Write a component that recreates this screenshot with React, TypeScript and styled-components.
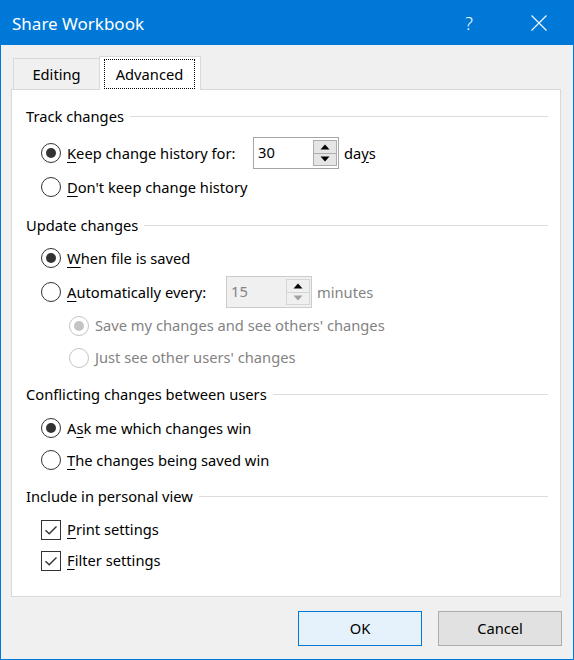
import React from "react";
import styled, { createGlobalStyle } from "styled-components";

const GlobalStyle = createGlobalStyle`
  html, body { margin: 0; padding: 0; background: #ffffff; }
  body { font-family: "Noto Sans", "Open Sans", Arial, sans-serif; }
  #root { width: 574px; height: 660px; }
`;

const FONT = `"Noto Sans", "Open Sans", Arial, sans-serif`;

const Window = styled.div`
  width: 574px;
  height: 660px;
  box-sizing: border-box;
  border: 1px solid #0078d7;
  border-top: none;
  display: flex;
  flex-direction: column;
  background: #f0f0f0;
  font-family: ${FONT};
  font-size: 14.7px;
  color: #000;
`;

const TitleBar = styled.div`
  height: 45px;
  flex-shrink: 0;
  background: #0078d7;
  display: flex;
  align-items: center;
  margin: 0 -1px;
  padding-left: 12px;
`;

const Title = styled.div`
  flex: 1;
  color: #fff;
  font-size: 17px;
  padding-top: 1px;
`;

const CaptionButton = styled.div`
  width: 70px;
  height: 45px;
  display: flex;
  align-items: center;
  justify-content: center;
  color: #fff;
  font-size: 18px;
  font-weight: 300;
`;

const Body = styled.div`
  flex: 1;
  display: flex;
  flex-direction: column;
  padding: 11px 12px 0 10px;
`;

const TabStrip = styled.div`
  height: 33px;
  display: flex;
  align-items: flex-end;
  padding-left: 2px;
`;

const Tab = styled.div<{ $active?: boolean }>`
  box-sizing: border-box;
  display: flex;
  align-items: ${(p) => (p.$active ? "flex-start" : "center")};
  justify-content: center;
  background: ${(p) => (p.$active ? "#ffffff" : "#f0f0f0")};
  border: 1px solid #d9d9d9;
  border-bottom: none;
  ${(p) =>
    p.$active
      ? `
    width: 102px;
    height: 34px;
    margin-bottom: -1px;
    position: relative;
    z-index: 1;
    padding: 2px 5px 1px 4px;
  `
      : `
    width: 86px;
    height: 31px;
    border-right: none;
    padding-bottom: 1px;
  `}
`;

const FocusRing = styled.div`
  flex: 1;
  height: 30px;
  box-sizing: border-box;
  border: 1px dotted #000;
  display: flex;
  align-items: center;
  justify-content: center;
  padding-bottom: 1px;
`;

const Panel = styled.div`
  height: 508px;
  box-sizing: border-box;
  background: #fff;
  border: 1px solid #d9d9d9;
  padding: 16px 12px 0 14px;
  display: flex;
  flex-direction: column;
`;

const Section = styled.div<{ $mt?: number }>`
  display: flex;
  flex-direction: column;
  margin-top: ${(p) => p.$mt ?? 0}px;
`;

const SectionHeader = styled.div`
  height: 20px;
  display: flex;
  align-items: center;
  gap: 6px;
  white-space: nowrap;
`;

const Rule = styled.div`
  flex: 1;
  height: 1px;
  background: #dcdcdc;
  margin-top: 1px;
`;

const Options = styled.div<{ $mt: number }>`
  display: flex;
  flex-direction: column;
  margin-top: ${(p) => p.$mt}px;
`;

const OptionRow = styled.div<{ $h: number; $indent?: number }>`
  height: ${(p) => p.$h}px;
  display: flex;
  align-items: center;
  padding-left: ${(p) => p.$indent ?? 15}px;
  white-space: nowrap;
`;

const Radio = styled.span<{ $checked?: boolean; $disabled?: boolean }>`
  width: 20px;
  height: 20px;
  box-sizing: border-box;
  flex-shrink: 0;
  border-radius: 50%;
  border: 1px solid ${(p) => (p.$disabled ? "#c4c4c4" : "#333333")};
  background: #fff;
  display: flex;
  align-items: center;
  justify-content: center;
  margin-right: 6px;
  &::after {
    content: "";
    width: 10px;
    height: 10px;
    border-radius: 50%;
    background: ${(p) => (p.$disabled ? "#c4c4c4" : "#333333")};
    display: ${(p) => (p.$checked ? "block" : "none")};
  }
`;

const CheckBox = styled.span`
  width: 20px;
  height: 20px;
  box-sizing: border-box;
  flex-shrink: 0;
  border: 1px solid #333333;
  background: #fff;
  display: flex;
  align-items: center;
  justify-content: center;
  margin-right: 6px;
`;

const Label = styled.span<{ $disabled?: boolean; $w?: number }>`
  color: ${(p) => (p.$disabled ? "#838383" : "#000")};
  ${(p) => (p.$w ? `width: ${p.$w}px; flex-shrink: 0;` : "")}
  padding-bottom: 1px;
  u {
    text-underline-offset: 3px;
  }
`;

const SpinBox = styled.div<{ $disabled?: boolean }>`
  width: 86px;
  height: 32px;
  box-sizing: border-box;
  flex-shrink: 0;
  border: 1px solid ${(p) => (p.$disabled ? "#cccccc" : "#a6a6a6")};
  background: ${(p) => (p.$disabled ? "#f0f0f0" : "#ffffff")};
  display: flex;
  align-items: center;
  padding: 2px 1px 2px 4px;
`;

const SpinValue = styled.span<{ $disabled?: boolean }>`
  flex: 1;
  color: ${(p) => (p.$disabled ? "#838383" : "#000")};
  padding-bottom: 3px;
`;

const SpinButtons = styled.div`
  width: 24px;
  height: 26px;
  display: flex;
  flex-direction: column;
`;

const SpinHalf = styled.div<{ $disabled?: boolean; $bottom?: boolean }>`
  flex: 1;
  box-sizing: border-box;
  border: 1px solid ${(p) => (p.$disabled ? "#d5d5d5" : "#adadad")};
  ${(p) => (p.$bottom ? "border-top: none;" : "")}
  background: ${(p) => (p.$disabled ? "#f0f0f0" : "#e5e5e5")};
  display: flex;
  align-items: center;
  justify-content: center;
`;

const Unit = styled.span<{ $disabled?: boolean }>`
  margin-left: 5px;
  color: ${(p) => (p.$disabled ? "#838383" : "#000")};
  padding-bottom: 1px;
  u {
    text-underline-offset: 3px;
  }
`;

const ButtonRow = styled.div`
  margin-top: 14px;
  display: flex;
  justify-content: flex-end;
  gap: 16px;
  margin-right: -1px;
`;

const DialogButton = styled.button<{ $default?: boolean }>`
  width: 124px;
  height: 35px;
  box-sizing: border-box;
  font-family: ${FONT};
  font-size: 14.7px;
  color: #000;
  padding: 0 0 1px 0;
  border: 1px solid ${(p) => (p.$default ? "#0078d7" : "#adadad")};
  background: ${(p) => (p.$default ? "#e5f1fb" : "#e1e1e1")};
`;

const Arrow = ({ up, color }: { up?: boolean; color: string }) => (
  <svg width="10" height="6" viewBox="0 0 10 6">
    <polygon points={up ? "0.5,5.5 9.5,5.5 5,0.5" : "0.5,0.5 9.5,0.5 5,5.5"} fill={color} />
  </svg>
);

const Spinner = ({ value, disabled }: { value: string; disabled?: boolean }) => (
  <SpinBox $disabled={disabled}>
    <SpinValue $disabled={disabled}>{value}</SpinValue>
    <SpinButtons>
      <SpinHalf $disabled={disabled}>
        <Arrow up color="#000" />
      </SpinHalf>
      <SpinHalf $disabled={disabled} $bottom>
        <Arrow color={disabled ? "#a0a0a0" : "#000"} />
      </SpinHalf>
    </SpinButtons>
  </SpinBox>
);

const Check = () => (
  <CheckBox>
    <svg width="18" height="18" viewBox="0 0 18 18">
      <path d="M3.5 9.2 L7.2 12.8 L14.5 5.5" fill="none" stroke="#333" strokeWidth="1.4" />
    </svg>
  </CheckBox>
);

export default function App() {
  return (
    <>
      <GlobalStyle />
      <Window>
        <TitleBar>
          <Title>Share Workbook</Title>
          <CaptionButton>?</CaptionButton>
          <CaptionButton>
            <svg width="16" height="16" viewBox="0 0 16 16">
              <path d="M0.5 0.5 L15.5 15.5 M15.5 0.5 L0.5 15.5" stroke="#fff" strokeWidth="1.1" />
            </svg>
          </CaptionButton>
        </TitleBar>
        <Body>
          <TabStrip>
            <Tab>Editing</Tab>
            <Tab $active>
              <FocusRing>Advanced</FocusRing>
            </Tab>
          </TabStrip>
          <Panel>
            <Section>
              <SectionHeader>
                <span>Track changes</span>
                <Rule />
              </SectionHeader>
              <Options $mt={10}>
                <OptionRow $h={34}>
                  <Radio $checked />
                  <Label $w={186}>
                    <u>K</u>eep change history for:
                  </Label>
                  <Spinner value="30" />
                  <Unit>
                    da<u>y</u>s
                  </Unit>
                </OptionRow>
                <OptionRow $h={34}>
                  <Radio />
                  <Label>
                    <u>D</u>on't keep change history
                  </Label>
                </OptionRow>
              </Options>
            </Section>

            <Section $mt={11}>
              <SectionHeader>
                <span>Update changes</span>
                <Rule />
              </SectionHeader>
              <Options $mt={6}>
                <OptionRow $h={34}>
                  <Radio $checked />
                  <Label>
                    <u>W</u>hen file is saved
                  </Label>
                </OptionRow>
                <OptionRow $h={34}>
                  <Radio />
                  <Label $w={159}>
                    <u>A</u>utomatically every:
                  </Label>
                  <Spinner value="15" disabled />
                  <Unit $disabled>minutes</Unit>
                </OptionRow>
                <OptionRow $h={33} $indent={43}>
                  <Radio $checked $disabled />
                  <Label $disabled>Save my changes and see others' changes</Label>
                </OptionRow>
                <OptionRow $h={31} $indent={43}>
                  <Radio $disabled />
                  <Label $disabled>Just see other users' changes</Label>
                </OptionRow>
              </Options>
            </Section>

            <Section $mt={11}>
              <SectionHeader>
                <span>Conflicting changes between users</span>
                <Rule />
              </SectionHeader>
              <Options $mt={8}>
                <OptionRow $h={32}>
                  <Radio $checked />
                  <Label>
                    A<u>s</u>k me which changes win
                  </Label>
                </OptionRow>
                <OptionRow $h={32}>
                  <Radio />
                  <Label>
                    <u>T</u>he changes being saved win
                  </Label>
                </OptionRow>
              </Options>
            </Section>

            <Section $mt={10}>
              <SectionHeader>
                <span>Include in personal view</span>
                <Rule />
              </SectionHeader>
              <Options $mt={8}>
                <OptionRow $h={31}>
                  <Check />
                  <Label>
                    <u>P</u>rint settings
                  </Label>
                </OptionRow>
                <OptionRow $h={31}>
                  <Check />
                  <Label>
                    <u>F</u>ilter settings
                  </Label>
                </OptionRow>
              </Options>
            </Section>
          </Panel>
          <ButtonRow>
            <DialogButton $default>OK</DialogButton>
            <DialogButton>Cancel</DialogButton>
          </ButtonRow>
        </Body>
      </Window>
    </>
  );
}
